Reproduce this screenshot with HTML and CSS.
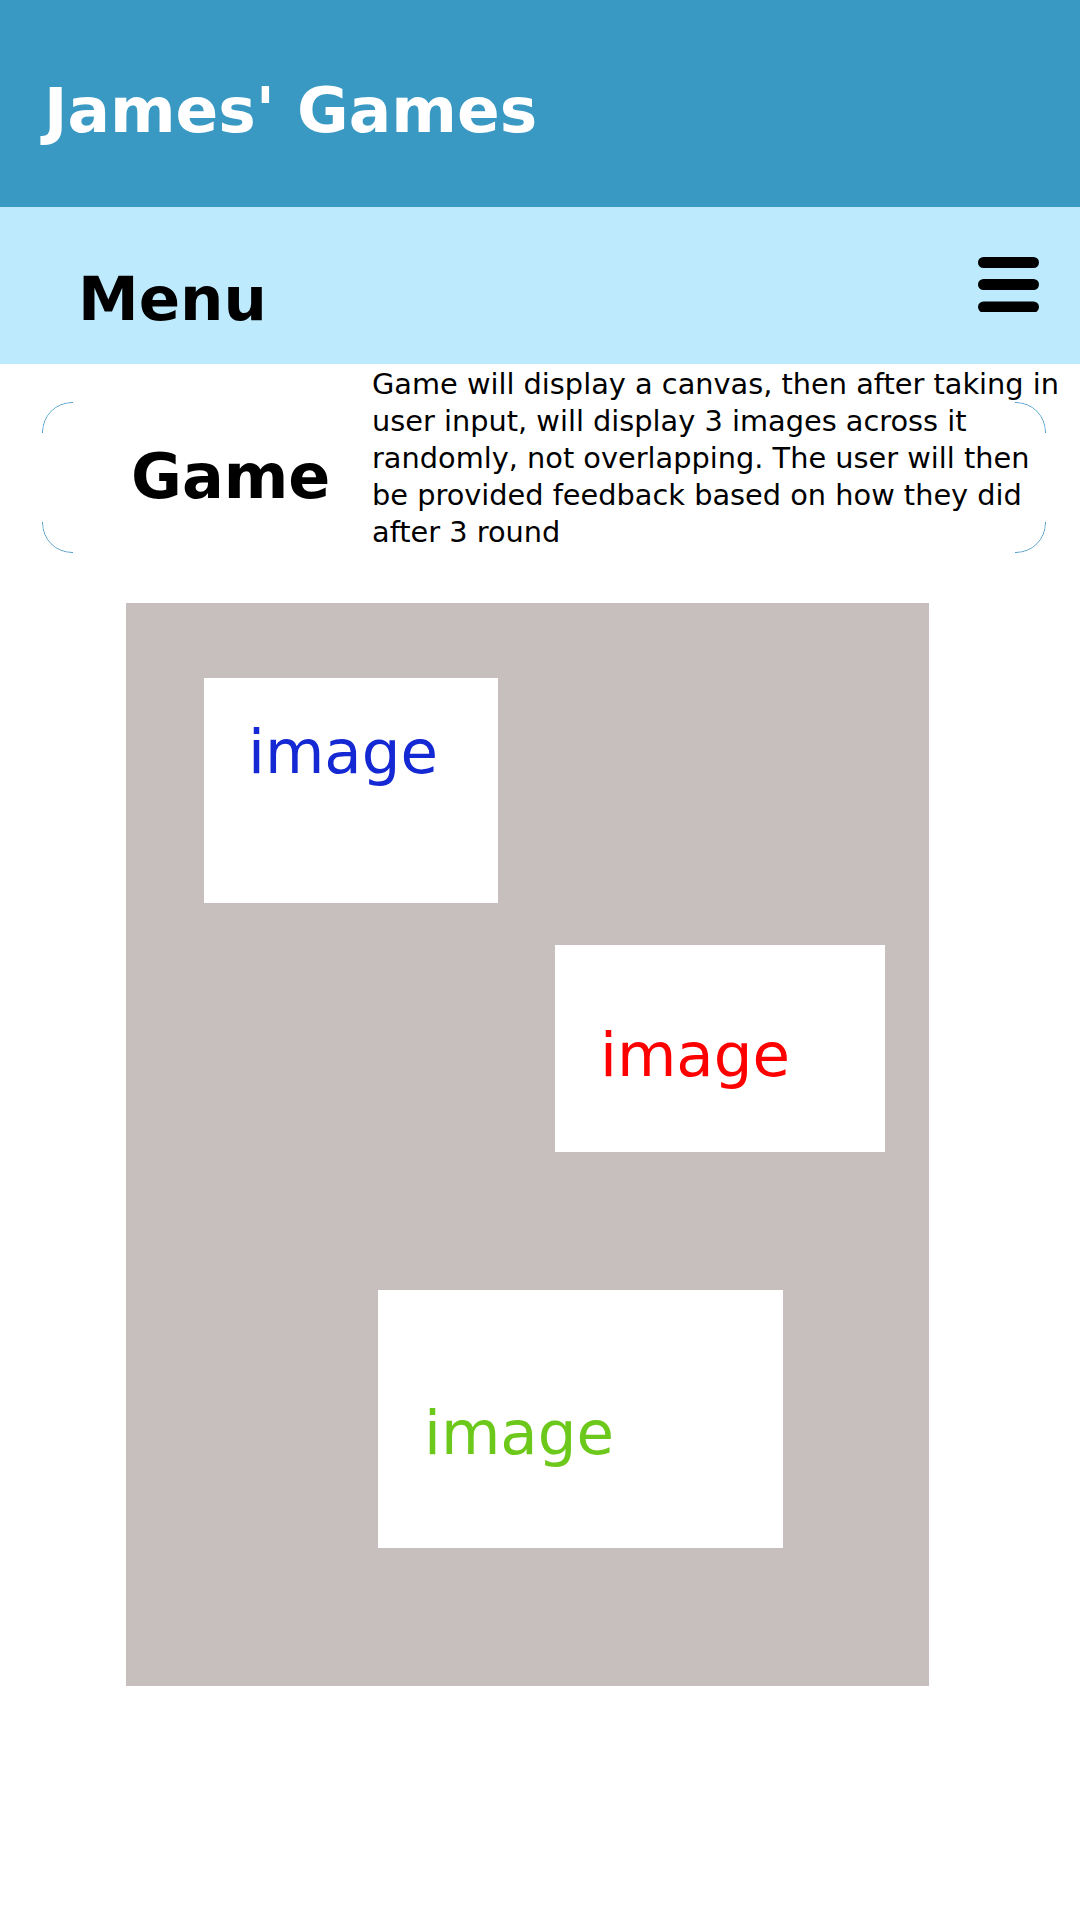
FILE: index.html
```html
<!doctype html>
<html lang="en">
<head>
<meta charset="utf-8">
<title>James' Games</title>
<meta name="viewport" content="width=device-width, initial-scale=1">
<link rel="stylesheet" href="styles.css">
</head>
<body>

<header class="site-head">
	<h1 class="site-title">James' Games</h1>
</header>

<nav class="menubar">
	<span class="menu-title">Menu</span>
	<svg class="burger" width="61" height="55" viewBox="0 0 61 55" aria-label="menu">
		<line x1="5.5" y1="5.5" x2="55.5" y2="5.5"/>
		<line x1="5.5" y1="27.5" x2="55.5" y2="27.5"/>
		<line x1="5.5" y1="50" x2="55.5" y2="50"/>
	</svg>
</nav>

<section class="intro">
	<h2 class="intro-title">Game</h2>
	<p class="intro-text">Game will display a canvas, then after taking in user input, will display 3 images across it randomly, not overlapping. The user will then be provided feedback based on how they did after 3 round</p>
</section>

<svg class="board" width="803" height="1083" viewBox="0 0 803 1083">
	<rect width="803" height="1083" fill="#c7bfbe"/>
	<rect x="78" y="75" width="294" height="225" fill="#fff"/>
	<text x="122" y="170" class="pic pic-blue">image</text>
	<rect x="429" y="342" width="330" height="207" fill="#fff"/>
	<text x="474" y="473" class="pic pic-red">image</text>
	<rect x="252" y="687" width="405" height="258" fill="#fff"/>
	<text x="298" y="851" class="pic pic-green">image</text>
</svg>

</body>
</html>
```

FILE: styles.css
```css
html, body {margin: 0; padding: 0;}
body {
	background: #fff;
	font-family: "DejaVu Sans", Verdana, sans-serif;
	color: #000;
}

/* header */
.site-head {
	height: 207px;
	box-sizing: border-box;
	padding: 74px 0 0 44px;
	background: #3a99c2;
}
.site-title {
	margin: 0;
	font-size: 63px;
	font-weight: bold;
	line-height: normal;
	color: #fff;
}

/* menu */
.menubar {
	display: flex;
	justify-content: space-between;
	align-items: flex-start;
	height: 157px;
	box-sizing: border-box;
	padding: 0 41px 0 78px;
	background: #bdebfd;
}
.menu-title {
	margin-top: 56px;
	font-size: 61px;
	font-weight: bold;
	line-height: normal;
}
.burger {margin-top: 50px;}
.burger line {
	stroke: #000;
	stroke-width: 11;
	stroke-linecap: round;
}

/* intro card */
.intro {
	position: relative;
	display: flex;
	align-items: flex-start;
	padding: 2px 6px 0 131px;
}
.intro::before {
	content: "";
	position: absolute;
	left: 42px;
	right: 34px;
	top: 38px;
	height: 151px;
	box-sizing: border-box;
	border: 1px solid #4f9dcb;
	border-radius: 30px;
	/* only the rounded corners show */
	-webkit-mask:
		linear-gradient(#000, #000) left top / 31px 31px no-repeat,
		linear-gradient(#000, #000) right top / 31px 31px no-repeat,
		linear-gradient(#000, #000) left bottom / 31px 31px no-repeat,
		linear-gradient(#000, #000) right bottom / 31px 31px no-repeat;
	pointer-events: none;
}
.intro-title {
	flex: 0 0 241px;
	margin: 74px 0 0;
	font-size: 62px;
	font-weight: bold;
	line-height: normal;
}
.intro-text {
	flex: 1;
	margin: 0;
	font-size: 28.8px;
	line-height: 37px;
}

/* board */
.board {
	display: block;
	margin: 52px 0 0 126px;
}
.pic {
	font-family: "DejaVu Sans", Verdana, sans-serif;
	font-size: 61px;
}
.pic-blue {fill: #1428d3;}
.pic-red {fill: #ff0000;}
.pic-green {fill: #6cc81a;}
```
